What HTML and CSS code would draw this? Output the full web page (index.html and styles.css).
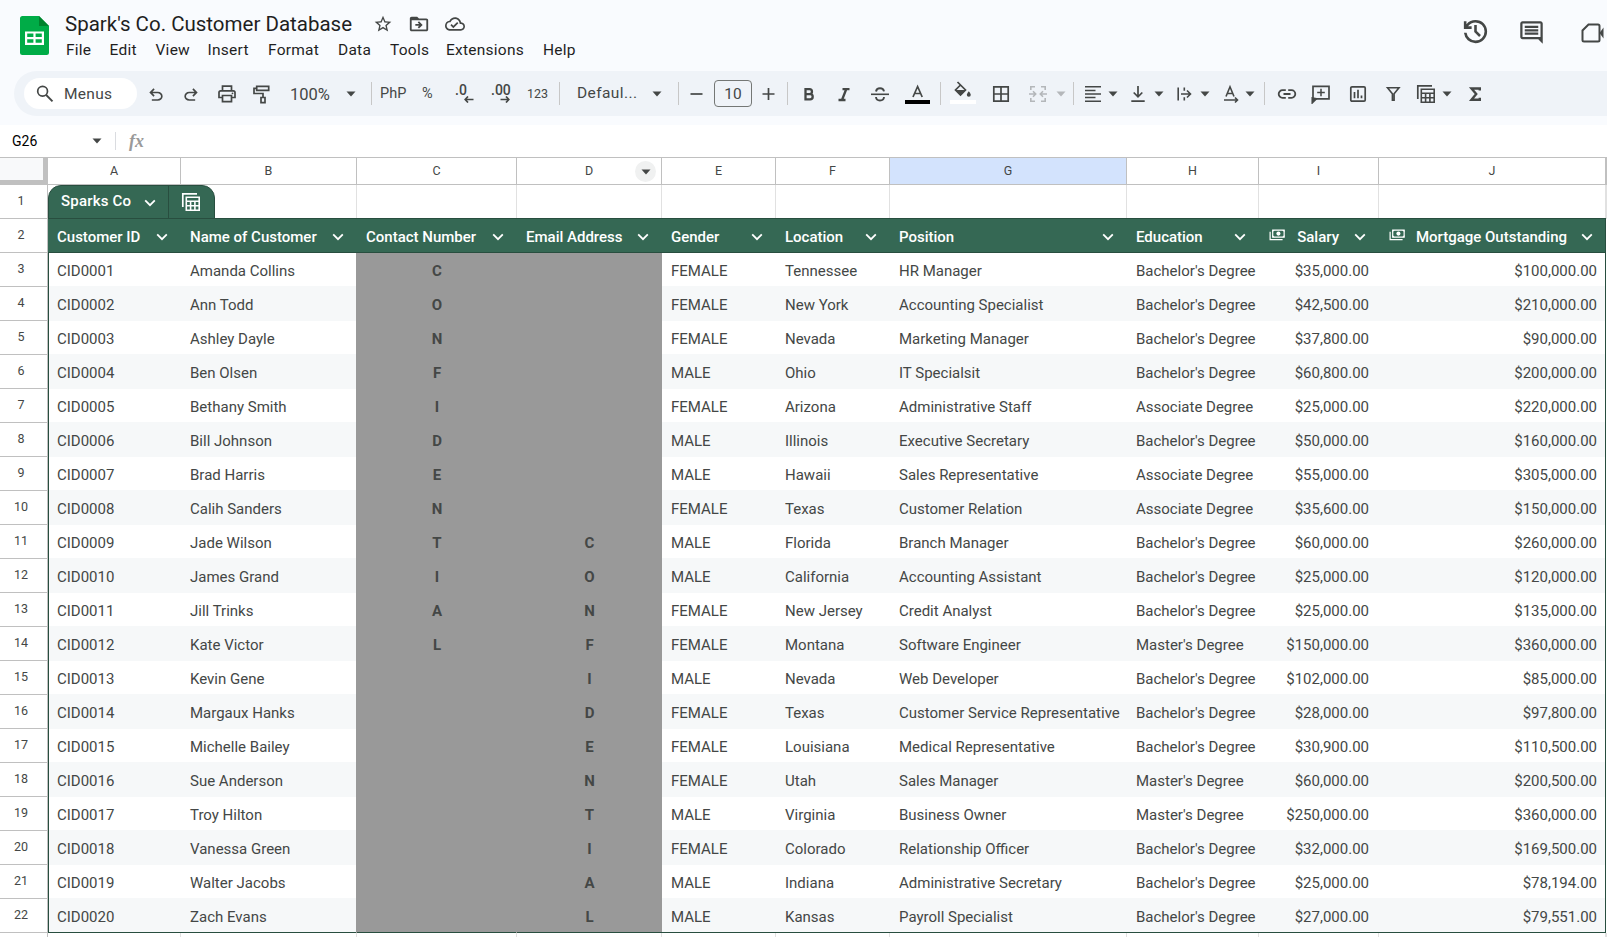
FILE: index.html
```
<!DOCTYPE html>
<html lang="en">
<head>
    <meta charset="UTF-8">
    <meta name="viewport" content="width=device-width, initial-scale=1.0">
    <title>Spark's Co. Customer Database</title>
    <link rel="stylesheet" href="styles.css">
</head>
<body>
    <!-- Shared icons -->
    <svg class="sprite" xmlns="http://www.w3.org/2000/svg">
        <symbol id="caret" viewBox="0 0 10 6"><path d="M0.5 0.5h9L5 5.5z"/></symbol>
        <symbol id="chevron" viewBox="0 0 12 8"><path d="M1.2 1.4L6 6.2l4.800-4.800" fill="none" stroke="currentColor" stroke-width="1.8"/></symbol>
        <symbol id="money" viewBox="0 0 18 13"><path d="M1 3v8.500h13.500M3.800 1.200h12.400v7.600H3.800z" fill="none" stroke="currentColor" stroke-width="1.300"/><circle cx="10" cy="5" r="2.200"/><path d="M3.500 1h2.500L3.500 3.500zM16.500 1H14l2.500 2.500zM3.500 9V6.500L6 9zM16.500 9V6.500L14 9z"/></symbol>
        <symbol id="tables" viewBox="0 0 20 20"><path d="M1.800 15V1.800H16" fill="none" stroke="currentColor" stroke-width="1.700"/><path d="M5.300 5.300h12.900v12.900H5.300zM5 9.200h13.500M5 13.700h13.500M9.600 9.500v8.500M13.900 9.500v8.500" fill="none" stroke="currentColor" stroke-width="1.600"/></symbol>
    </svg>

    <header>
        <svg class="logo" viewBox="0 0 29 39">
            <path d="M2.500 0H19l10 10v26.500a2.500 2.500 0 0 1-2.500 2.500h-24A2.500 2.500 0 0 1 0 36.500v-34A2.500 2.500 0 0 1 2.500 0z" fill="#00ac47"/>
            <path d="M19 0l10 10H19z" fill="#00832d"/>
            <path d="M5 15.500h19v13.500H5zM7.200 17.600v3.500h6.200v-3.500zM15.600 17.600v3.500h6.200v-3.500zM7.200 23.300v3.500h6.200v-3.500zM15.600 23.300v3.500h6.200v-3.500z" fill="#fff" fill-rule="evenodd"/>
        </svg>
        <div class="doc">
            <div class="title-row">
                <h1>Spark's Co. Customer Database</h1>
                <svg class="star" viewBox="0 0 24 24"><path d="M22 9.240l-7.190-.62L12 2 9.190 8.630 2 9.240l5.460 4.730L5.820 21 12 17.270 18.180 21l-1.630-7.030L22 9.240zM12 15.400l-3.760 2.270 1-4.280-3.320-2.880 4.380-.38L12 6.100l1.710 4.040 4.380.38-3.320 2.880 1 4.280L12 15.400z"/></svg>
                <svg class="folder" viewBox="0 0 24 24"><path d="M20 6h-8l-2-2H4c-1.100 0-2 .9-2 2v12c0 1.100.9 2 2 2h16c1.100 0 2-.9 2-2V8c0-1.100-.9-2-2-2zm0 12H4V8h16v10zM12 17l4-4-4-4-1.400 1.400L12.200 12H8v2h4.200l-1.600 1.600z"/></svg>
                <svg class="cloud" viewBox="0 0 24 24"><path d="M19.350 10.040C18.670 6.590 15.640 4 12 4 9.110 4 6.600 5.640 5.350 8.040 2.340 8.360 0 10.910 0 14c0 3.310 2.690 6 6 6h13c2.760 0 5-2.240 5-5 0-2.640-2.050-4.780-4.650-4.960zM19 18H6c-2.210 0-4-1.790-4-4 0-2.050 1.530-3.760 3.560-3.970l1.070-.11.5-.95C8.080 7.140 9.940 6 12 6c2.620 0 4.880 1.860 5.390 4.430l.3 1.500 1.530.11c1.560.1 2.780 1.410 2.780 2.960 0 1.650-1.350 3-3 3zm-9-3.820l-2.090-2.090L6.500 13.500 10 17l6.010-6.010-1.410-1.410z"/></svg>
            </div>
            <nav class="menu">
                <span>File</span><span>Edit</span><span>View</span><span>Insert</span><span>Format</span><span>Data</span><span>Tools</span><span>Extensions</span><span>Help</span>
            </nav>
        </div>
        <div class="actions">
            <svg class="history" viewBox="0 0 24 24"><path d="M12 21q-3.450 0-6.012-2.288T3.050 13H5.100q.35 2.600 2.312 4.300T12 19q2.925 0 4.963-2.037T19 12t-2.037-4.963T12 5q-1.725 0-3.225.8T6.250 8H9v2H3V4h2v2.350q1.275-1.600 3.113-2.475T12 3q1.875 0 3.513.713t2.850 1.924 1.925 2.850T21 12t-.713 3.513-1.924 2.850-2.850 1.925T12 21m2.800-4.800L11 12.400V7h2v4.600l3.200 3.200z"/></svg>
            <svg class="comment" viewBox="0 0 24 24"><path d="M21.990 4c0-1.100-.89-2-1.990-2H4c-1.100 0-2 .9-2 2v12c0 1.100.9 2 2 2h14l4 4-.01-18zM20 4v12H4V4h16zM6 12h12v2H6zm0-3h12v2H6zm0-3h12v2H6z"/></svg>
            <svg class="camera" viewBox="0 0 23 20"><path d="M7.500 1.500H17a1.500 1.500 0 0 1 1.500 1.500v14a1.500 1.500 0 0 1-1.500 1.500H3A1.500 1.500 0 0 1 1.500 17V7.500z" fill="none" stroke="currentColor" stroke-width="2"/><path d="M18.500 10L22.500 4.500v11z"/></svg>
        </div>
    </header>

    <div class="toolbar-wrap">
        <div class="toolbar">
            <div class="search">
                <svg viewBox="0 0 20 20"><circle cx="7.600" cy="7.300" r="4.900" fill="none" stroke="currentColor" stroke-width="1.700"/><path d="M11.200 11l6.300 6.300" stroke="currentColor" stroke-width="1.900"/></svg>
                <span>Menus</span>
            </div>
            <svg class="tool low" viewBox="0 0 24 24"><path d="M7 19v-2h7.100q1.575 0 2.738-1T18 13.500t-1.162-2.500T14.100 10H7.800l2.600 2.600L9 14 4 9l5-5 1.400 1.400L7.800 8h6.300q2.425 0 4.163 1.575T20 13.500t-1.737 3.925T14.100 19z"/></svg>
            <svg class="tool low" viewBox="0 0 24 24"><path d="M9.900 19q-2.425 0-4.162-1.575T4 13.500t1.738-3.925T9.900 8h6.300l-2.600-2.600L15 4l5 5-5 5-1.400-1.400 2.600-2.600H9.900q-1.575 0-2.737 1T6 13.500 7.163 16 9.900 17H17v2z"/></svg>
            <svg class="tool" viewBox="0 0 20 20"><path d="M5.500 6.500V2.200h9v4.300M5.200 13.500H2V8.500q0-1.700 1.700-1.700h12.600q1.700 0 1.700 1.700v5h-3.200M5.500 11.500h9v6.200h-9z" fill="none" stroke="currentColor" stroke-width="1.700"/><circle cx="15.500" cy="9.300" r=".9"/></svg>
            <svg class="tool" viewBox="0 0 20 20"><path d="M4.700 2.300h12v4h-12zM4.500 4.300H2v5.200h9v4" fill="none" stroke="currentColor" stroke-width="1.700"/><path d="M9 13.500h4v5.200H9z" fill="none" stroke="currentColor" stroke-width="1.700"/></svg>
            <span class="zoom">100%</span>
            <svg class="caret"><use href="#caret"/></svg>
            <i class="sep"></i>
            <span class="num">PhP</span>
            <span class="num">%</span>
            <span class="dec">.0<svg viewBox="0 0 10 7"><path d="M4 .5L1.200 3.500 4 6.500M1.500 3.500H9.500" fill="none" stroke="currentColor" stroke-width="1.700"/></svg></span>
            <span class="dec">.00<svg viewBox="0 0 10 7"><path d="M6 .5l2.800 3L6 6.500M8.500 3.500H.5" fill="none" stroke="currentColor" stroke-width="1.700"/></svg></span>
            <span class="fmt">123</span>
            <i class="sep"></i>
            <span class="font">Defaul...</span>
            <svg class="caret"><use href="#caret"/></svg>
            <i class="sep"></i>
            <svg class="tool" viewBox="0 0 20 20"><path d="M3.500 10h12" stroke="currentColor" stroke-width="1.700"/></svg>
            <span class="size">10</span>
            <svg class="tool" viewBox="0 0 20 20"><path d="M3.500 10h12M9.500 4v12" stroke="currentColor" stroke-width="1.700"/></svg>
            <i class="sep"></i>
            <svg class="tool" viewBox="0 0 20 20"><path d="M6.500 5.200h4a2.400 2.400 0 0 1 0 4.900h-4zM6.500 10.100h4.600a2.600 2.600 0 0 1 0 5.200H6.500z" fill="none" stroke="currentColor" stroke-width="2.300"/></svg>
            <svg class="tool" viewBox="0 0 20 20"><path d="M8.500 5.100h7M4.500 16h7M12.300 5L8 16" fill="none" stroke="currentColor" stroke-width="2.300"/></svg>
            <svg class="tool" viewBox="0 0 20 20"><path d="M1 10.300h18" stroke="currentColor" stroke-width="1.600"/><path d="M14 7.300Q13.500 4.300 10 4.300T6 7.500M6 13q.3 3.500 4 3.500t4-3.500" fill="none" stroke="currentColor" stroke-width="1.900"/></svg>
            <svg class="tool wide" viewBox="0 0 26 20"><path d="M8 13L12.600 2.500 17.200 13M9.500 9.500h6.200" fill="none" stroke="currentColor" stroke-width="1.700"/><path d="M0 16h25v4H0z" fill="#000"/></svg>
            <i class="sep"></i>
            <svg class="tool fill" viewBox="0 0 26 24"><path d="M7.500 2l8 8-5 5-5-5 5-5" fill="none" stroke="currentColor" stroke-width="1.700"/><path d="M5 10h11l-5.500 5.500zM18.800 11.200q2 2.300 2 3.500a2 2 0 0 1-4 0q0-1.200 2-3.500z"/><path d="M0 20h26v4H0z" fill="#fff"/></svg>
            <svg class="tool" viewBox="0 0 20 20"><path d="M2.800 2.800h14.400v14.400H2.800zM10 3v14M3 10h14" fill="none" stroke="currentColor" stroke-width="1.700"/></svg>
            <svg class="tool off" viewBox="0 0 20 20"><path d="M7 2.800H2.800V6M7 17.200H2.800V14M13 2.800h4.200V6M13 17.200h4.200V14M1 10h6.500M5 7.300L7.700 10 5 12.700M19 10h-6.500M15 7.300L12.300 10l2.700 2.700" fill="none" stroke="currentColor" stroke-width="1.600"/></svg>
            <svg class="caret off"><use href="#caret"/></svg>
            <i class="sep"></i>
            <svg class="tool" viewBox="0 0 20 20"><path d="M2 2.800h16M2 6.400h10.500M2 10h16M2 13.600h10.500M2 17.200h16" stroke="currentColor" stroke-width="1.500"/></svg>
            <svg class="caret"><use href="#caret"/></svg>
            <svg class="tool" viewBox="0 0 20 20"><path d="M10 2v10.500M5.700 8.500l4.300 4.300 4.300-4.300M3.300 17.200h13.400" fill="none" stroke="currentColor" stroke-width="1.700"/></svg>
            <svg class="caret"><use href="#caret"/></svg>
            <svg class="tool" viewBox="0 0 20 20"><path d="M4.200 3.500v13M10.300 3.500v3.200M10.300 13.300v3.200M7 10h9.300M13 6.500l3.500 3.500-3.500 3.500" fill="none" stroke="currentColor" stroke-width="1.600"/></svg>
            <svg class="caret"><use href="#caret"/></svg>
            <svg class="tool" viewBox="0 0 20 20"><path d="M5 12.500L9 2.800l4 9.700M6.200 9.500h5.600M3 16h13M14 13.500l2.500 2.500-2.500 2.500" fill="none" stroke="currentColor" stroke-width="1.600"/></svg>
            <svg class="caret"><use href="#caret"/></svg>
            <i class="sep"></i>
            <svg class="tool" viewBox="0 0 20 20"><path d="M8.800 6.200H5.500a3.800 3.800 0 0 0 0 7.600h3.300M11.200 6.200h3.300a3.800 3.800 0 0 1 0 7.600h-3.300M6.500 10h7" fill="none" stroke="currentColor" stroke-width="1.800"/></svg>
            <svg class="tool" viewBox="0 0 20 20"><path d="M2 16.500V2.300h16v12.500H3.800z" fill="none" stroke="currentColor" stroke-width="1.700"/><path d="M1.200 14v5l4.300-4.300zM10 4.700v7.600M6.200 8.500h7.600" stroke="currentColor" stroke-width="1.500"/></svg>
            <svg class="tool" viewBox="0 0 20 20"><rect x="2.800" y="2.800" width="14.400" height="14.400" rx="1.200" fill="none" stroke="currentColor" stroke-width="1.700"/><path d="M6.500 8v6.200M10 5.800v8.400M13.500 11.500v2.700" stroke="currentColor" stroke-width="1.700"/></svg>
            <svg class="tool" viewBox="0 0 20 20"><path d="M4.500 3.700h11.500L11.100 9.700v6.500H9.400V9.700z" fill="none" stroke="currentColor" stroke-width="1.600"/></svg>
            <svg class="tool"><use href="#tables"/></svg>
            <svg class="caret"><use href="#caret"/></svg>
            <svg class="tool" viewBox="0 0 20 20"><path d="M14.800 6.500V4.500H6.500L11.200 10 6.500 15.700h8.300v-2" fill="none" stroke="currentColor" stroke-width="2.400"/></svg>
        </div>
    </div>

    <div class="formula-bar">
        <span class="cell-name">G26</span>
        <svg class="caret"><use href="#caret"/></svg>
        <i class="sep"></i>
        <span class="fx">fx</span>
    </div>

    <div class="sheet">
        <div class="row letters">
            <div class="corner"></div>
            <div>A</div><div>B</div><div>C</div>
            <div>D<span class="col-menu"><svg class="caret"><use href="#caret"/></svg></span></div>
            <div>E</div><div>F</div><div class="selected">G</div><div>H</div><div>I</div><div>J</div><div></div>
        </div>
        <div class="row blank">
            <div class="row-num">1</div>
            <div class="tab-cell">
                <div class="table-tab">
                    <span class="tab-name">Sparks Co <svg class="chevron"><use href="#chevron"/></svg></span>
                    <span class="tab-icon"><svg><use href="#tables"/></svg></span>
                </div>
            </div>
            <div></div><div></div><div></div><div></div><div></div><div></div><div></div><div></div><div></div><div></div>
        </div>
        <div class="row heads" id="heads">
            <div class="row-num">2</div>
        </div>
        <div id="rows"></div>
        <div class="row blank">
            <div class="row-num"></div>
            <div></div><div></div><div></div><div></div><div></div><div></div><div></div><div></div><div></div><div></div><div></div>
        </div>
    </div>

    <script>
        const columns = ['Customer ID', 'Name of Customer', 'Contact Number', 'Email Address', 'Gender', 'Location', 'Position', 'Education', 'Salary', 'Mortgage Outstanding'];

        // name, gender, location, position, degree, salary, mortgage
        const customers = [
            ['Amanda Collins', 'FEMALE', 'Tennessee', 'HR Manager', "Bachelor's", '35,000', '100,000'],
            ['Ann Todd', 'FEMALE', 'New York', 'Accounting Specialist', "Bachelor's", '42,500', '210,000'],
            ['Ashley Dayle', 'FEMALE', 'Nevada', 'Marketing Manager', "Bachelor's", '37,800', '90,000'],
            ['Ben Olsen', 'MALE', 'Ohio', 'IT Specialsit', "Bachelor's", '60,800', '200,000'],
            ['Bethany Smith', 'FEMALE', 'Arizona', 'Administrative Staff', 'Associate', '25,000', '220,000'],
            ['Bill Johnson', 'MALE', 'Illinois', 'Executive Secretary', "Bachelor's", '50,000', '160,000'],
            ['Brad Harris', 'MALE', 'Hawaii', 'Sales Representative', 'Associate', '55,000', '305,000'],
            ['Calih Sanders', 'FEMALE', 'Texas', 'Customer Relation', 'Associate', '35,600', '150,000'],
            ['Jade Wilson', 'MALE', 'Florida', 'Branch Manager', "Bachelor's", '60,000', '260,000'],
            ['James Grand', 'MALE', 'California', 'Accounting Assistant', "Bachelor's", '25,000', '120,000'],
            ['Jill Trinks', 'FEMALE', 'New Jersey', 'Credit Analyst', "Bachelor's", '25,000', '135,000'],
            ['Kate Victor', 'FEMALE', 'Montana', 'Software Engineer', "Master's", '150,000', '360,000'],
            ['Kevin Gene', 'MALE', 'Nevada', 'Web Developer', "Bachelor's", '102,000', '85,000'],
            ['Margaux Hanks', 'FEMALE', 'Texas', 'Customer Service Representative', "Bachelor's", '28,000', '97,800'],
            ['Michelle Bailey', 'FEMALE', 'Louisiana', 'Medical Representative', "Bachelor's", '30,900', '110,500'],
            ['Sue Anderson', 'FEMALE', 'Utah', 'Sales Manager', "Master's", '60,000', '200,500'],
            ['Troy Hilton', 'MALE', 'Virginia', 'Business Owner', "Master's", '250,000', '360,000'],
            ['Vanessa Green', 'FEMALE', 'Colorado', 'Relationship Officer', "Bachelor's", '32,000', '169,500'],
            ['Walter Jacobs', 'MALE', 'Indiana', 'Administrative Secretary', "Bachelor's", '25,000', '78,194'],
            ['Zach Evans', 'MALE', 'Kansas', 'Payroll Specialist', "Bachelor's", '27,000', '79,551']
        ];
        const word = 'CONFIDENTIAL';

        // Table header
        columns.forEach((name, i) => {
            const money = i > 7 ? '<svg class="money"><use href="#money"/></svg>' : '';
            document.getElementById('heads').insertAdjacentHTML('beforeend',
                `<div class="${money ? 'is-money' : ''}">${money}<span>${name}</span><svg class="chevron"><use href="#chevron"/></svg></div>`);
        });

        // Customer rows
        customers.forEach((c, i) => {
            const id = 'CID' + String(i + 1).padStart(4, '0');
            document.getElementById('rows').insertAdjacentHTML('beforeend', `
                <div class="row data">
                    <div class="row-num">${i + 3}</div>
                    <div class="cell first">${id}</div>
                    <div class="cell">${c[0]}</div>
                    <div class="cell hidden-col">${word[i] || ''}</div>
                    <div class="cell hidden-col">${word[i - 8] || ''}</div>
                    <div class="cell">${c[1]}</div>
                    <div class="cell">${c[2]}</div>
                    <div class="cell">${c[3]}</div>
                    <div class="cell">${c[4]} Degree</div>
                    <div class="cell amount">$${c[5]}.00</div>
                    <div class="cell amount last">$${c[6]}.00</div>
                </div>`);
        });
    </script>
</body>
</html>
```
FILE: styles.css
```
* {
    margin: 0;
    padding: 0;
    box-sizing: border-box;
}

body {
    width: 1607px;
    height: 937px;
    overflow: hidden;
    background: #fff;
    color: #444746;
    font-family: Roboto, Arial, sans-serif;
}

svg {
    display: block;
    fill: currentColor;
    flex-shrink: 0;
}

.sprite {
    display: none;
}

/* Title and menus */
header {
    display: flex;
    height: 71px;
    padding-left: 20px;
    background: #f9fbfe;
}

.logo {
    width: 29px;
    height: 39px;
    margin-top: 16px;
}

.doc {
    margin-left: 16px;
    padding-top: 10px;
}

.title-row {
    display: flex;
    align-items: center;
    height: 28px;
}

h1 {
    width: 308px;
    font-size: 20.5px;
    font-weight: 400;
    color: #1f1f1f;
    white-space: nowrap;
}

.star, .cloud {
    width: 20px;
    height: 20px;
}

.star {
    margin-right: 15px;
}

.folder {
    width: 22px;
    height: 22px;
    margin-right: 15px;
}

.menu {
    display: grid;
    grid-template-columns: 43.5px 46px 52px 60.5px 70px 52px 56px 97px 40px;
    padding: 3px 0 0 1px;
    font-size: 15.5px;
    line-height: 18px;
    letter-spacing: 0.25px;
    color: #1f1f1f;
}

.actions {
    display: flex;
    gap: 27px;
    margin-left: auto;
    padding-top: 16px;
}

.history {
    width: 31px;
    height: 31px;
}

.comment {
    width: 27px;
    height: 27px;
    margin-top: 3px;
}

.camera {
    width: 23px;
    height: 20px;
    margin: 7px 3px 0 9px;
}

/* Toolbar */
.toolbar-wrap {
    height: 54px;
    padding-left: 14px;
    background: #f9fbfe;
}

.toolbar {
    display: grid;
    grid-template-columns: 122px 35px 36px 35px 39px 55px 25px 9px 42px 33px 36px 36px 32px 18px 75px 26px 9px 27px 45px 28px 12px 35px 36px 35px 35px 10px 41px 37px 28px 17px 10px 25px 20px 26px 20px 26px 21px 24px 19px 13px 34px 37px 35px 33px 26px 23px 1fr;
    align-items: center;
    height: 45px;
    padding-left: 10px;
    background: #eff3f8;
    border-radius: 23px 0 0 23px;
}

.search {
    display: flex;
    align-items: center;
    width: 113px;
    height: 31px;
    padding-left: 11px;
    background: #fff;
    border-radius: 16px;
    font-size: 15.5px;
    letter-spacing: 0.3px;
}

.search svg {
    width: 20px;
    height: 20px;
    margin-right: 9px;
}

.tool {
    width: 20px;
    height: 20px;
    margin-top: 1px;
}

.tool.low {
    margin-top: 3px;
}

.tool.wide {
    width: 26px;
    margin-top: 1px;
}

.tool.fill {
    width: 26px;
    height: 24px;
    margin-top: -3px;
}

.off {
    color: #b4b7ba;
}

.caret {
    width: 10px;
    height: 6px;
}

.sep {
    width: 1px;
    height: 23px;
    background: #c7c7c7;
}

.zoom {
    margin: 2px 0 0 -1px;
    font-size: 16.5px;
}

.num {
    font-size: 14.5px;
}

.fmt {
    font-size: 12.5px;
}

.dec {
    width: 22px;
    margin-top: -7px;
    font-size: 14px;
    font-weight: 500;
    line-height: 14px;
}

.dec svg {
    width: 10px;
    height: 7px;
    margin: -1px 0 -6px 9px;
}

.font {
    margin-top: -1px;
    font-size: 15.5px;
    letter-spacing: 0.4px;
}

.size {
    width: 38px;
    height: 27px;
    border: 1px solid #747775;
    border-radius: 4px;
    font-size: 15.5px;
    line-height: 26px;
    text-align: center;
}

/* Name box and formula */
.formula-bar {
    display: flex;
    align-items: center;
    height: 33px;
    padding-left: 12px;
    border-bottom: 1px solid #c0c0c0;
}

.cell-name {
    width: 80px;
    font-size: 14px;
    color: #000;
}

.formula-bar .sep {
    height: 18px;
    margin: 0 13px;
    background: #dadce0;
}

.fx {
    font-family: "Liberation Serif", serif;
    font-style: italic;
    font-weight: bold;
    font-size: 18px;
    color: #9a9a9a;
}

/* Spreadsheet grid */
.row {
    display: grid;
    grid-template-columns: 48px 133px 176px 160px 145px 114px 114px 237px 132px 120px 227px 1px;
    grid-template-rows: 100%;
    height: 34px;
}

.letters {
    height: 27px;
    font-size: 12.5px;
    line-height: 26px;
    text-align: center;
}

.letters > div {
    position: relative;
    border-right: 1px solid #c0c0c0;
    border-bottom: 1px solid #c0c0c0;
}

.letters .corner {
    background: #f8f9fa;
    border-right: 5px solid #c0c0c0;
    border-bottom: 5px solid #c0c0c0;
}

.letters .selected {
    background: #d3e3fd;
}

.col-menu {
    position: absolute;
    top: 3px;
    right: 5px;
    display: flex;
    align-items: center;
    justify-content: center;
    width: 21px;
    height: 21px;
    border-radius: 50%;
    background: #f0f1f1;
}

.row-num {
    padding-right: 5px;
    border-right: 1px solid #c0c0c0;
    border-bottom: 1px solid #c0c0c0;
    font-size: 12.5px;
    line-height: 32px;
    text-align: center;
}

.blank > div:not(.row-num) {
    border-right: 1px solid #e1e1e1;
}

.blank > .tab-cell {
    position: relative;
    border-right: 0 !important;
}

.table-tab {
    position: absolute;
    top: 0;
    left: 0;
    display: flex;
    width: 167px;
    height: 34px;
    background: #356854;
    border: 1px solid #284e3f;
    border-radius: 13px 13px 0 0;
    color: #fff;
}

.tab-name {
    display: flex;
    align-items: center;
    width: 120px;
    padding: 0 0 2px 12px;
    border-right: 1px solid #284e3f;
    font-size: 15px;
    font-weight: 500;
    letter-spacing: 0.2px;
}

.tab-name .chevron {
    margin: 3px 0 0 13px;
}

.tab-icon {
    display: flex;
    align-items: center;
    justify-content: center;
    flex: 1;
    padding: 0 2px 1px 0;
}

.tab-icon svg {
    width: 20px;
    height: 20px;
}

.chevron {
    width: 12px;
    height: 8px;
}

.heads > div:not(.row-num) {
    display: flex;
    align-items: center;
    padding: 2px 13px 0 9px;
    background: #356854;
    border-bottom: 1px solid #284e3f;
    box-shadow: 0 -1px 0 #284e3f;
    color: #fff;
    font-size: 15px;
    font-weight: 500;
    white-space: nowrap;
}

.heads > div:last-child {
    padding-right: 12px !important;
    border-right: 1px solid #284e3f;
}

.heads span {
    flex: 1;
}

.heads .is-money span {
    padding-right: 15px;
    text-align: right;
}

.heads .is-money:last-child span {
    padding-right: 14px;
}

.money {
    width: 17px;
    height: 12px;
    margin: 0 0 3px 1px;
}

.cell {
    padding: 0 9px;
    font-size: 15px;
    line-height: 36px;
    white-space: nowrap;
}

.data:nth-child(odd) .cell {
    background: linear-gradient(#f6f8f9, #f6f8f9) bottom / 100% 1px no-repeat;
}

.data:nth-child(even) .cell {
    background: #f6f8f9;
}

.data .cell.hidden-col {
    background: #999;
    box-shadow: -1px 0 0 #999;
    font-weight: 700;
    text-align: center;
}

.cell.first {
    padding-left: 8px;
    border-left: 1px solid #284e3f;
}

.cell.amount {
    padding-right: 10px;
    text-align: right;
}

.cell.last {
    padding-right: 8px;
    border-right: 1px solid #284e3f;
}

.data:last-child .cell {
    border-bottom: 1px solid #284e3f;
}
```
